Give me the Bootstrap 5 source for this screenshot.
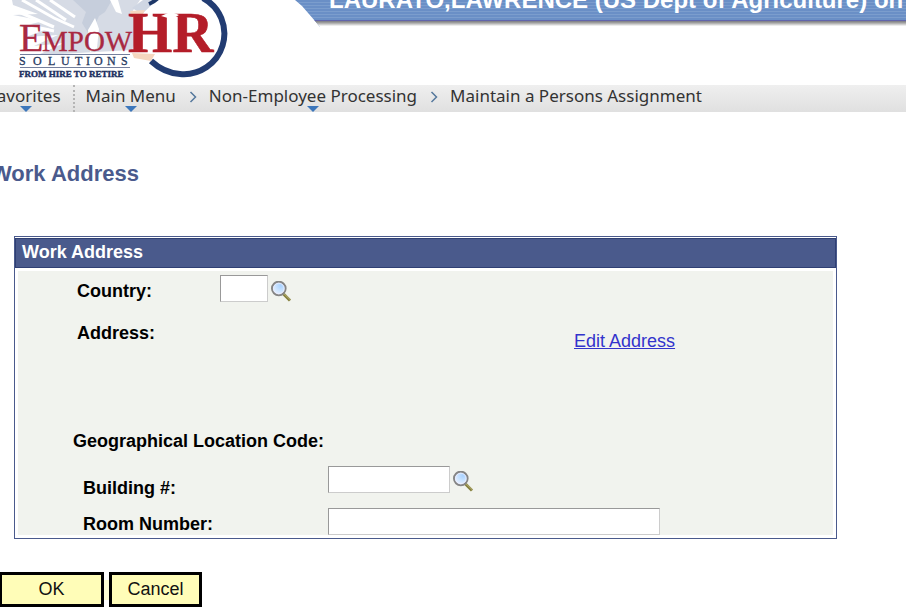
<!DOCTYPE html>
<html lang="en">
<head>
<meta charset="utf-8">
<meta name="viewport" content="width=device-width, initial-scale=1">
<title>Work Address</title>
<link href="https://cdn.jsdelivr.net/npm/bootstrap@5.3.0/dist/css/bootstrap.min.css" rel="stylesheet">
<style>
body{font-family:"Liberation Sans",Arial,sans-serif;font-size:18px;line-height:22px;color:#000;background:#fff;overflow:hidden}
.masthead{height:85px}
.logo{width:232px;height:85px;margin-right:59px}
.banner{height:27px;padding-left:38px;color:#fff;font-size:24px;line-height:28px;font-weight:700;
 background:linear-gradient(#0000 0 20px,#6164ab 20px 21px,#85858c 21px 22px,#9b9b9b 22px 23px,#b4b4b4 23px 24px,#d0d0d0 24px 25px,#ececec 25px 26px,#fff 26px),repeating-linear-gradient(#6a8fc6 0 2px,#7b9dcd 2px 3px);
 clip-path:polygon(0 0,100% 0,100% 100%,29px 100%,24px 21px,11px 6px,4px 0)}
.banner span{margin-top:-14px}
.crumbs{height:27px;margin-left:-12px;background:linear-gradient(#efefef,#e0e0e0);font-family:"Noto Sans",Tahoma,sans-serif;font-size:17px;line-height:22px}
.crumbs a{color:#333;text-decoration:none;height:27px}
.crumbs .menu-link::after{content:"";position:absolute;left:50%;bottom:0;margin-left:-6px;border:6px solid transparent;border-top-color:#3d77bb;border-bottom:0}
.crumbs .first{padding-right:12px;border-right:2px dotted #b5b5b5;margin-right:11px}
.crumbs .first::after{margin-left:-10px}
.crumbs svg{width:8px;height:12px;margin:6px 12px 0 13px}
.page-title{font-size:22px;line-height:26px;font-weight:700;color:#4a5a8c;margin:49px 0 49px -9px}
.panel{margin:0 69px 33px 14px;border:1px solid #4a5a8c;padding-top:1px}
.panel-title{background:#4a5a8c;border:1px solid #2f3f73;font-size:18px;line-height:26px;font-weight:700;color:#fff;padding:0 0 2px 6px;margin:0}
.panel-body{background:#f1f3ee;margin:3px;padding-top:4px}
.cap{font-weight:700;width:202px;padding-left:59px}
.cap.wide{width:310px;padding-left:65px}
.cap.geo{padding-left:55px}
.box{height:27px;border:1px solid;border-color:#999 #ccc #ccc #999;border-radius:0;padding:0 4px;background:#fff;min-width:0}
.w-code{width:48px}.w-bldg{width:122px}.w-room{width:332px}
.lookup{border:0;background:none;padding:0;margin-left:3px;width:20px;height:22px}
.lookup svg{display:block;width:20px;height:21px}
.addr{margin:20px 0 78px;height:30px}
.addr a{color:#33c;margin-left:354px}
.gap-bldg{margin-top:14px;height:33px}
.gap-room{margin-top:9px}
.act{border:3px solid #000;background:#fffdb8;color:#111;height:35px;padding:0 0 2px;border-radius:0;font-size:18px;line-height:26px}
.w-ok{width:105px;margin-left:-1px}.w-cancel{width:93px}
.joint{width:5px;height:20px;background:#ffffd2}
</style>
<script src="https://cdn.jsdelivr.net/npm/bootstrap@5.3.0/dist/js/bootstrap.bundle.min.js" defer></script>
</head>
<body>
<svg width="0" height="0" class="position-absolute" aria-hidden="true">
 <defs><radialGradient id="lens" cx=".65" cy=".3" r=".8"><stop offset="0" stop-color="#a9d2ff"/><stop offset=".45" stop-color="#c9e3ff"/><stop offset="1" stop-color="#f2f5ff"/></radialGradient>
 <symbol id="glass" viewBox="0 0 20 21"><path d="M12.5 13 19 19.500" stroke="#85803c" stroke-width="3"/><path d="M13 12.700 19.300 18.800" stroke="#b9b27a" stroke-width="1"/><circle cx="7.800" cy="7.500" r="6.800" fill="url(#lens)" stroke="#858585" stroke-width="2"/><circle cx="7.800" cy="7.500" r="5.400" fill="none" stroke="#eef" stroke-width=".8"/></symbol></defs>
</svg>
<header class="masthead d-flex align-items-start">
 <svg class="logo flex-shrink-0" viewBox="0 0 232 85" role="img" aria-label="EmpowHR Solutions">
  <path d="M12 0H140L132 12 141 30 132 50 60 54 40 54 64 43 34 46 58 35 26 37 50 28 18 27 44 21 13 15 38 14 13 5Z" fill="#d6dbe5"/>
  <path d="M22 0 54 18 74 27M36 0 66 20M50 0 75 17M14 10 54 27M17 23 54 31" stroke="#fff" stroke-width="3" fill="none"/>
  <path d="M73 0 86 12 82 23 90 36 99 16 105 12 112 0Z" fill="#c6cedc"/>
  <path d="M110 0 116 12 122 14 118 0Z" fill="#fff"/>
  <path d="M95 18 99 29 97 48 90 52 88 30Z" fill="#fff"/>
  <path d="M157 0H143L132 8 142 14Z" fill="#cfd6e3"/>
  <path d="M149 4Q154 2 158-2" fill="none" stroke="#1d3768" stroke-width="4"/>
  <path d="M203-2A40.500 40.500 0 0 1 180 74Q164 73 151 61" fill="none" stroke="#223c72" stroke-width="6"/>
  <path d="M130 11 145 10 140 20 132 18ZM132 53 155 54 151 61 134 58Z" fill="#f5d6bf"/>
  <g font-family="Liberation Serif,serif" font-weight="700">
   <text x="128" y="52" font-size="57" fill="#b41d29" stroke="#b41d29" stroke-width=".6">HR</text>
   <g font-weight="400" fill="#a92942" stroke="#a92942" stroke-width=".3"><text x="19" y="51" font-size="40">E</text><text x="42" y="51" font-size="29">MPOW</text></g>
   <path d="M20 54.500H130" stroke="#747f9d"/>
   <text y="65" font-size="12" font-weight="400" fill="#273a61" stroke="#273a61" stroke-width=".3"><tspan x="19 33 48 61 75 86 94 107 121">SOLUTIONS</tspan></text>
   <path d="M20 67.500H130" stroke="#747f9d"/>
   <text x="19" y="77" font-size="9" fill="#202f60" stroke="#202f60" stroke-width=".4">FROM HIRE TO RETIRE</text>
  </g>
  <path d="M171 7 174 13 179 15 174 18 171 21 168 18 161 16 168 13Z" fill="#fff"/>
 </svg>
 <div class="banner d-flex flex-grow-1 text-nowrap overflow-hidden"><span>LAURATO,LAWRENCE (US Dept of Agriculture) on</span></div>
</header>
<nav class="crumbs d-flex text-nowrap" aria-label="Breadcrumb">
 <a href="#" class="menu-link first position-relative">Favorites</a>
 <a href="#" class="menu-link position-relative">Main Menu</a>
 <svg viewBox="0 0 8 12" aria-hidden="true"><path d="m1.500 1 5 5-5 5" fill="none" stroke="#55789d" stroke-width="1.500"/></svg>
 <a href="#" class="menu-link position-relative">Non-Employee Processing</a>
 <svg viewBox="0 0 8 12" aria-hidden="true"><path d="m1.500 1 5 5-5 5" fill="none" stroke="#55789d" stroke-width="1.500"/></svg>
 <a href="#">Maintain a Persons Assignment</a>
</nav>
<main>
 <h1 class="page-title">Work Address</h1>
 <form>
  <section class="panel">
   <h2 class="panel-title">Work Address</h2>
   <div class="panel-body">
    <div class="d-flex align-items-end">
     <label class="cap" for="country">Country:</label><input class="box w-code" id="country" type="text">
     <button class="lookup" type="button" aria-label="Look up country"><svg aria-hidden="true"><use href="#glass"/></svg></button>
    </div>
    <div class="addr d-flex">
     <div class="cap">Address:</div><a class="align-self-end" href="#">Edit Address</a>
    </div>
    <div class="cap wide geo">Geographical Location Code:</div>
    <div class="gap-bldg d-flex align-items-start">
     <label class="cap wide align-self-end" for="building">Building #:</label><input class="box w-bldg" id="building" type="text">
     <button class="lookup mt-1" type="button" aria-label="Look up building"><svg aria-hidden="true"><use href="#glass"/></svg></button>
    </div>
    <div class="gap-room d-flex align-items-end">
     <label class="cap wide" for="room">Room Number:</label><input class="box w-room" id="room" type="text">
    </div>
   </div>
  </section>
  <div class="d-flex align-items-center">
   <button class="act w-ok" type="button">OK</button><span class="joint"></span><button class="act w-cancel" type="button">Cancel</button>
  </div>
 </form>
</main>
</body>
</html>
